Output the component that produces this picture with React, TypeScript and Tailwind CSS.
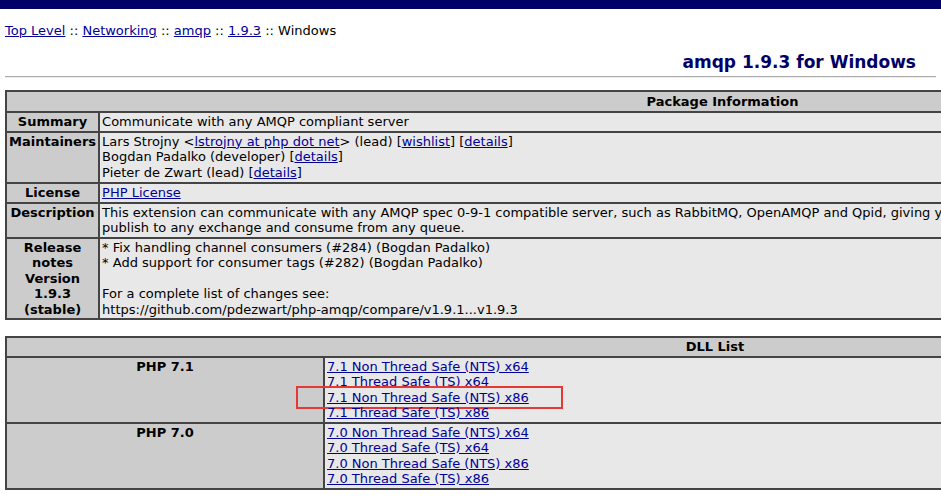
import React from "react";

const L = ({ children }: { children: React.ReactNode }) => (
  <a href="#" className="text-[#000099] underline">{children}</a>
);

const lab = "bg-[#cccccc] font-bold text-center align-top px-[2px] py-[1px] border-[2px] border-[#444]";
const val = "bg-[#e8e8e8] align-top px-[2px] py-[1px] border-[2px] border-[#444]";

export default function App() {
  const dll = (v: string) => [
    `${v} Non Thread Safe (NTS) x64`,
    `${v} Thread Safe (TS) x64`,
    `${v} Non Thread Safe (NTS) x86`,
    `${v} Thread Safe (TS) x86`,
  ];
  return (
    <div className="w-[941px] h-[500px] overflow-hidden bg-white text-black text-[13px] leading-[15.5px]" style={{ fontFamily: "Verdana, 'DejaVu Sans', sans-serif" }}>
      <div className="h-[9px] bg-[#000066]" />
      <div className="px-[5px] pt-[14px]">
        <L>Top Level</L> :: <L>Networking</L> :: <L>amqp</L> :: <L>1.9.3</L> :: Windows
      </div>
      <div className="text-right pr-[25px] pt-[13px] text-[17px] leading-[20px] font-bold text-[#000066]">amqp 1.9.3 for Windows</div>
      <div className="mx-[5px] mt-[4px] h-[2px] border-t border-[#aaa] bg-[#eee]" />
      <table className="ml-[5px] mt-[12px] w-[1435px] border-collapse">
        <tbody>
          <tr><th colSpan={2} className={lab + " py-[2px]"}>Package Information</th></tr>
          <tr><td className={lab + " w-[93px] py-[1px]"}>Summary</td><td className={val + " py-[1px]"}>Communicate with any AMQP compliant server</td></tr>
          <tr><td className={lab}>Maintainers</td><td className={val + " pb-[2px]"}>
            Lars Strojny &lt;<L>lstrojny at php dot net</L>&gt; (lead) [<L>wishlist</L>] [<L>details</L>]<br />
            Bogdan Padalko (developer) [<L>details</L>]<br />
            Pieter de Zwart (lead) [<L>details</L>]
          </td></tr>
          <tr><td className={lab}>License</td><td className={val}><L>PHP License</L></td></tr>
          <tr><td className={lab}>Description</td><td className={val}>This extension can communicate with any AMQP spec 0-9-1 compatible server, such as RabbitMQ, OpenAMQP and Qpid, giving you the ability to create and delete exchanges and queues, as well as<br />publish to any exchange and consume from any queue.</td></tr>
          <tr><td className={lab + " pt-[1px] pb-[1px]"}>Release<br />notes<br />Version<br />1.9.3<br />(stable)</td><td className={val + " pt-[1px]"}>
            * Fix handling channel consumers (#284) (Bogdan Padalko)<br />
            * Add support for consumer tags (#282) (Bogdan Padalko)<br /><br />
            For a complete list of changes see:<br />
            https://github.com/pdezwart/php-amqp/compare/v1.9.1...v1.9.3
          </td></tr>
        </tbody>
      </table>
      <table className="ml-[5px] mt-[16px] w-[1420px] border-collapse">
        <tbody>
          <tr><th colSpan={2} className={lab + " py-[1px]"}>DLL List</th></tr>
          {["7.1", "7.0"].map((v) => (
            <tr key={v}>
              <td className={lab + " w-[318px]"}>PHP {v}</td>
              <td className={val}>
                {dll(v).map((t, i) => (
                  <div key={i} className="relative">
                    <L>{t}</L>
                    {v === "7.1" && i === 2 && (
                      <div className="absolute left-[-31px] top-[-4px] w-[267px] h-[23px] border-2 border-[#e53935]" />
                    )}
                  </div>
                ))}
              </td>
            </tr>
          ))}
        </tbody>
      </table>
    </div>
  );
}
